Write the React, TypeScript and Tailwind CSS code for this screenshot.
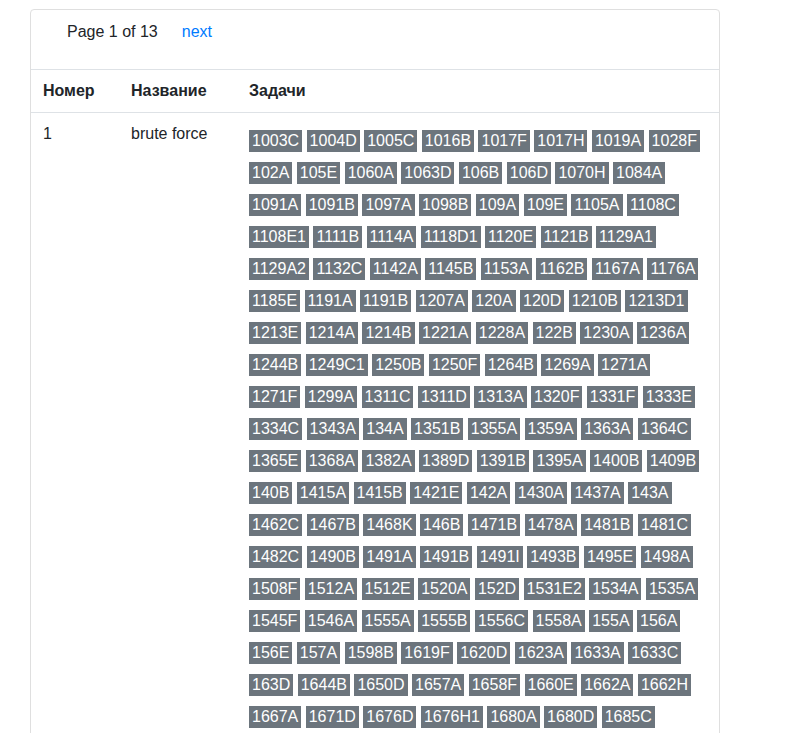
import React from 'react';

const rows: { id: number; name: string; problems: string[] }[] = [
  {
    id: 1,
    name: 'brute force',
    problems: [
      '1003C', '1004D', '1005C', '1016B', '1017F', '1017H', '1019A', '1028F',
      '102A', '105E', '1060A', '1063D', '106B', '106D', '1070H', '1084A',
      '1091A', '1091B', '1097A', '1098B', '109A', '109E', '1105A', '1108C',
      '1108E1', '1111B', '1114A', '1118D1', '1120E', '1121B', '1129A1',
      '1129A2', '1132C', '1142A', '1145B', '1153A', '1162B', '1167A', '1176A',
      '1185E', '1191A', '1191B', '1207A', '120A', '120D', '1210B', '1213D1',
      '1213E', '1214A', '1214B', '1221A', '1228A', '122B', '1230A', '1236A',
      '1244B', '1249C1', '1250B', '1250F', '1264B', '1269A', '1271A',
      '1271F', '1299A', '1311C', '1311D', '1313A', '1320F', '1331F', '1333E',
      '1334C', '1343A', '134A', '1351B', '1355A', '1359A', '1363A', '1364C',
      '1365E', '1368A', '1382A', '1389D', '1391B', '1395A', '1400B', '1409B',
      '140B', '1415A', '1415B', '1421E', '142A', '1430A', '1437A', '143A',
      '1462C', '1467B', '1468K', '146B', '1471B', '1478A', '1481B', '1481C',
      '1482C', '1490B', '1491A', '1491B', '1491I', '1493B', '1495E', '1498A',
      '1508F', '1512A', '1512E', '1520A', '152D', '1531E2', '1534A', '1535A',
      '1545F', '1546A', '1555A', '1555B', '1556C', '1558A', '155A', '156A',
      '156E', '157A', '1598B', '1619F', '1620D', '1623A', '1633A', '1633C',
      '163D', '1644B', '1650D', '1657A', '1658F', '1660E', '1662A', '1662H',
      '1667A', '1671D', '1676D', '1676H1', '1680A', '1680D', '1685C',
      '1688A', '1692B', '1695A', '16A', '1703A', '1714C', '1716A', '1717D',
    ],
  },
];

const App = () => {
  return (
    <div
      className="min-h-screen bg-white text-[#212529] pt-[9px]"
      style={{ fontFamily: '"Liberation Sans", Arial, sans-serif' }}
    >
      <div className="ml-[30px] w-[690px] border border-[#dfdfdf] rounded-[4px] overflow-hidden">
        <div className="flex items-start pt-[13px] pb-[28px] pl-[36px] text-base leading-[18px] border-b border-[#dee2e6]">
          <span>Page 1 of 13</span>
          <a href="#" className="ml-[24px] text-[#007bff]">
            next
          </a>
        </div>
        <table className="w-full border-collapse text-base leading-[18px]">
          <thead>
            <tr className="border-b border-[#dee2e6] text-left">
              <th className="w-[88px] px-3 pt-3 pb-[12px] font-bold">Номер</th>
              <th className="w-[118px] px-3 pt-3 pb-[12px] font-bold">Название</th>
              <th className="px-3 pt-3 pb-[12px] font-bold">Задачи</th>
            </tr>
          </thead>
          <tbody>
            {rows.map((row) => (
              <tr key={row.id} className="align-top">
                <td className="px-3 py-3">{row.id}</td>
                <td className="px-3 py-3">{row.name}</td>
                <td className="pl-3 pr-3 pt-[17px] pb-3">
                  <div className="w-[453px] flex flex-wrap gap-x-[4.45px] gap-y-[10px]">
                    {row.problems.map((p) => (
                      <span
                        key={p}
                        className="bg-[#6c757d] text-white text-base leading-4 px-[3px] py-[3px]"
                      >
                        {p}
                      </span>
                    ))}
                  </div>
                </td>
              </tr>
            ))}
          </tbody>
        </table>
      </div>
    </div>
  );
};

export default App;
